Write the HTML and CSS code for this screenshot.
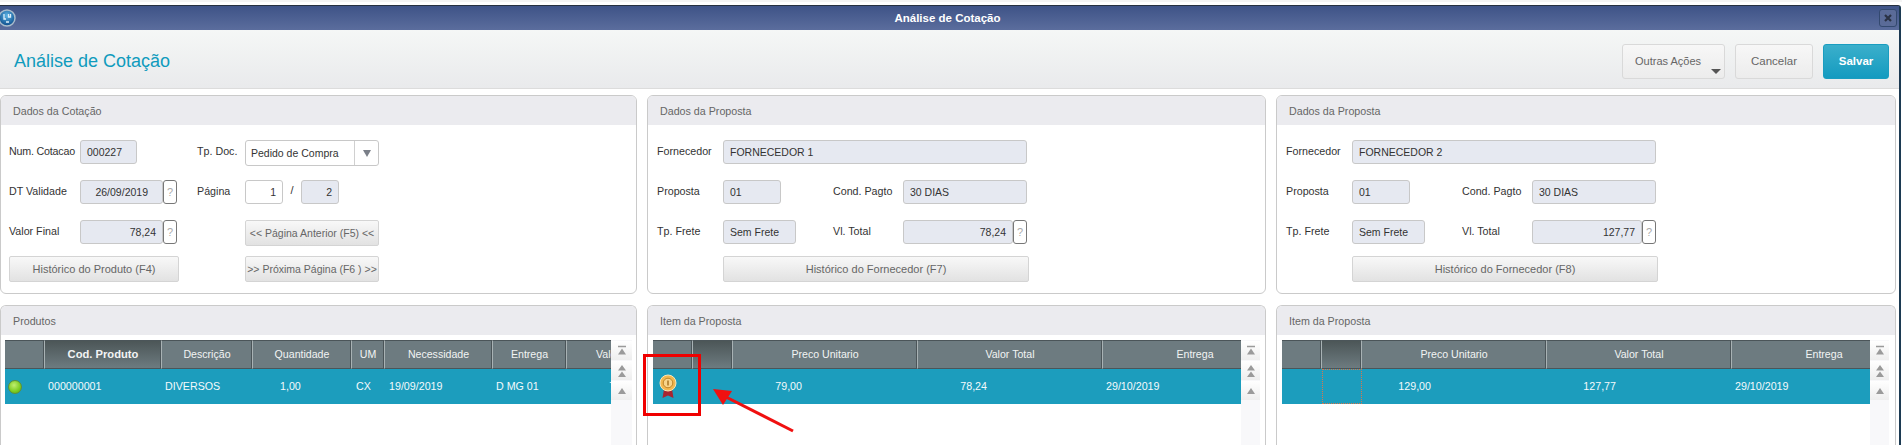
FILE: index.html
```html
<!DOCTYPE html>
<html lang="pt">
<head>
<meta charset="utf-8">
<title>Análise de Cotação</title>
<link rel="stylesheet" href="styles.css">
</head>
<body>
<div class="strip"></div>
<div class="window">
  <div class="titlebar">
    <svg class="logo" width="20" height="20" viewBox="0 0 20 20"><defs><radialGradient id="lg" cx="50%" cy="35%" r="65%"><stop offset="0" stop-color="#5db4e4"/><stop offset="1" stop-color="#0a4a8a"/></radialGradient></defs><circle cx="8" cy="10" r="8" fill="url(#lg)" stroke="#a9bccb" stroke-width="1.500"/><path d="M5 6v5h2M9.500 6v3h2V6M7 14h3" fill="none" stroke="#dceefa" stroke-width="1.300"/></svg>
    <span class="window-title">Análise de Cotação</span>
    <span class="close"><svg width="10" height="10" viewBox="0 0 10 10"><path d="M2 2l6 6M8 2l-6 6" stroke="#2a3244" stroke-width="2.200"/></svg></span>
  </div>
  <header class="head">
    <h1>Análise de Cotação</h1>
    <div class="actions">
      <button class="btn more">Outras Ações<i class="caret"></i></button>
      <button class="btn cancel">Cancelar</button>
      <button class="btn save">Salvar</button>
    </div>
  </header>
  <main class="content">
    <section class="panel">
      <h2>Dados da Cotação</h2>
      <div class="form form-cot">
        <label class="l1 squeeze">Num. Cotacao</label>
        <div class="field w57 span2">000227</div>
        <label class="c5">Tp. Doc.</label>
        <div class="field select c6e">Pedido de Compra<span class="sel-btn"><i class="sel-arrow"></i></span></div>

        <label class="l1">DT Validade</label>
        <div class="field right date">26/09/2019</div>
        <span class="help">?</span>
        <label class="c5">Página</label>
        <div class="field right white">1</div>
        <span class="slash">/</span>
        <div class="field right">2</div>

        <label class="l1">Valor Final</label>
        <div class="field right">78,24</div>
        <span class="help">?</span>
        <button class="gbtn c6e tight">&lt;&lt; Página Anterior (F5) &lt;&lt;</button>

        <button class="gbtn span3">Histórico do Produto (F4)</button>
        <button class="gbtn c6e tight">&gt;&gt; Próxima Página (F6 ) &gt;&gt;</button>
      </div>
    </section>

    <section class="panel">
      <h2>Dados da Proposta</h2>
      <div class="form form-prop">
        <label class="l1">Fornecedor</label>
        <div class="field c2e">FORNECEDOR 1</div>
        <label class="l1">Proposta</label>
        <div class="field w58">01</div>
        <label>Cond. Pagto</label>
        <div class="field c4e">30 DIAS</div>
        <label class="l1">Tp. Frete</label>
        <div class="field w73">Sem Frete</div>
        <label>Vl. Total</label>
        <div class="field right">78,24</div>
        <span class="help">?</span>
        <button class="gbtn c2f">Histórico do Fornecedor (F7)</button>
      </div>
    </section>

    <section class="panel">
      <h2>Dados da Proposta</h2>
      <div class="form form-prop">
        <label class="l1">Fornecedor</label>
        <div class="field c2e">FORNECEDOR 2</div>
        <label class="l1">Proposta</label>
        <div class="field w58">01</div>
        <label>Cond. Pagto</label>
        <div class="field c4e">30 DIAS</div>
        <label class="l1">Tp. Frete</label>
        <div class="field w73">Sem Frete</div>
        <label>Vl. Total</label>
        <div class="field right">127,77</div>
        <span class="help">?</span>
        <button class="gbtn c2f">Histórico do Fornecedor (F8)</button>
      </div>
    </section>

    <section class="panel lower">
      <h2>Produtos</h2>
      <div class="grid-wrap g1">
        <div class="table t-prod">
          <div class="th"></div><div class="th sel bold">Cod. Produto</div><div class="th">Descrição</div><div class="th">Quantidade</div><div class="th">UM</div><div class="th">Necessidade</div><div class="th">Entrega</div><div class="th start">Valor Total</div>
          <div class="td"><span class="led"></span></div><div class="td p3">000000001</div><div class="td p3">DIVERSOS</div><div class="td p27">1,00</div><div class="td p4">CX</div><div class="td p4">19/09/2019</div><div class="td p3">D MG 01</div><div class="td num">78,24</div>
        </div>
        <div class="scroll">
          <span class="sb"><svg width="12" height="12" viewBox="0 0 12 12"><path d="M2 1.500h8" stroke="#9a9a9a" stroke-width="1.500"/><path d="M6 3.500l4 6H2z" fill="#9a9a9a"/></svg></span>
          <span class="sb"><svg width="12" height="14" viewBox="0 0 12 14"><path d="M6 1l4 5.500H2zM6 7.500l4 5.500H2z" fill="#9a9a9a"/></svg></span>
          <span class="sb"><svg width="12" height="12" viewBox="0 0 12 12"><path d="M6 3l4 6H2z" fill="#9a9a9a"/></svg></span>
        </div>
      </div>
    </section>

    <section class="panel lower">
      <h2>Item da Proposta</h2>
      <div class="grid-wrap g2">
        <div class="table t-item">
          <div class="th"></div><div class="th sel"></div><div class="th">Preco Unitario</div><div class="th">Valor Total</div><div class="th">Entrega</div>
          <div class="td medal-cell"><svg width="18" height="26" viewBox="0 0 18 26"><path d="M5 15l-1.500 9 5.500-2.500 5.500 2.500L13 15z" fill="#a82430"/><circle cx="9" cy="9" r="8" fill="#f2b850" stroke="#fbe6b8" stroke-width="1"/><circle cx="9" cy="9" r="4.800" fill="#f8d48a" stroke="#c08428" stroke-width="1"/><path d="M9 6.500v5" stroke="#a46e1c" stroke-width="1.400"/></svg></div><div class="td"></div><div class="td num">79,00</div><div class="td num">78,24</div><div class="td p3">29/10/2019</div>
        </div>
        <div class="scroll">
          <span class="sb"><svg width="12" height="12" viewBox="0 0 12 12"><path d="M2 1.500h8" stroke="#9a9a9a" stroke-width="1.500"/><path d="M6 3.500l4 6H2z" fill="#9a9a9a"/></svg></span>
          <span class="sb"><svg width="12" height="14" viewBox="0 0 12 14"><path d="M6 1l4 5.500H2zM6 7.500l4 5.500H2z" fill="#9a9a9a"/></svg></span>
          <span class="sb"><svg width="12" height="12" viewBox="0 0 12 12"><path d="M6 3l4 6H2z" fill="#9a9a9a"/></svg></span>
        </div>
      </div>
    </section>

    <section class="panel lower">
      <h2>Item da Proposta</h2>
      <div class="grid-wrap g2">
        <div class="table t-item">
          <div class="th"></div><div class="th sel"></div><div class="th">Preco Unitario</div><div class="th">Valor Total</div><div class="th">Entrega</div>
          <div class="td"></div><div class="td focus"></div><div class="td num">129,00</div><div class="td num">127,77</div><div class="td p3">29/10/2019</div>
        </div>
        <div class="scroll">
          <span class="sb"><svg width="12" height="12" viewBox="0 0 12 12"><path d="M2 1.500h8" stroke="#9a9a9a" stroke-width="1.500"/><path d="M6 3.500l4 6H2z" fill="#9a9a9a"/></svg></span>
          <span class="sb"><svg width="12" height="14" viewBox="0 0 12 14"><path d="M6 1l4 5.500H2zM6 7.500l4 5.500H2z" fill="#9a9a9a"/></svg></span>
          <span class="sb"><svg width="12" height="12" viewBox="0 0 12 12"><path d="M6 3l4 6H2z" fill="#9a9a9a"/></svg></span>
        </div>
      </div>
    </section>
  </main>
</div>
<div class="mark-box"></div>
<svg class="mark-arrow" width="100" height="60" viewBox="0 0 100 60"><path d="M87 46L18 11" stroke="#f01010" stroke-width="3" fill="none"/><path d="M7 4l19 2-9 14z" fill="#f01010"/></svg>
</body>
</html>
```
FILE: styles.css
```css
* { box-sizing: border-box; }
html, body { margin: 0; height: 445px; overflow: hidden; background: #fff; }
body { position: relative; font: 11px "Liberation Sans", Arial, sans-serif; color: #333; }
.strip { height: 5px; background: linear-gradient(#f4f4f4 0 2px, #fff 2px); }
.window { border-top: 1px solid #26303f; border-right: 2px solid #1c3a52; border-top-right-radius: 3px; height: 440px; margin-right: 1px; }
.titlebar { height: 24px; padding-right: 4px; background: linear-gradient(#3e5387, #5b6d9d); display: flex; align-items: center; justify-content: center; position: relative; }
.logo { position: absolute; left: -1px; top: 2px; }
.window-title { color: #fff; font-weight: bold; font-size: 11.500px; }
.close { position: absolute; right: 2px; top: 3px; width: 18px; height: 18px; border: 1px solid #33496f; border-radius: 3px; background: #5a6b98; display: flex; align-items: center; justify-content: center; }
.head { height: 59px; background: linear-gradient(#f5f7f6, #e9eaec); border-bottom: 1px solid #dcdcdc; display: flex; align-items: center; justify-content: space-between; padding: 0 10px 0 14px; }
h1 { margin: 4px 0 0; font-size: 18px; font-weight: normal; color: #0f9bbd; }
.actions { display: flex; gap: 10px; margin-top: 4px; }
.btn { height: 35px; font: 11.500px "Liberation Sans", Arial, sans-serif; border: 1px solid #d9d9d9; border-radius: 3px; background: linear-gradient(#f7f7f7, #ececec); color: #666; padding: 0; position: relative; }
.more { width: 103px; font-size: 11px; text-align: left; padding: 0 0 1px 12px; }
.cancel { width: 78px; }
.save { width: 66px; border-color: #1a9dc0; background: linear-gradient(#3bafcb, #149bc0); color: #fff; font-weight: bold; }
.caret { position: absolute; right: 3px; bottom: 4px; border: 5px solid transparent; border-top: 5px solid #555; border-bottom: 0; width: 0; height: 0; }
.content { display: grid; grid-template-columns: 637px 619px 620px; column-gap: 10px; row-gap: 11px; grid-template-rows: 199px 1fr; padding-top: 6px; }
.panel { border: 1px solid #cacaca; border-radius: 6px; background: #fff; overflow: hidden; }
.lower { height: 160px; border-bottom: 0; border-radius: 6px 6px 0 0; }
.panel h2 { margin: 0; height: 29px; line-height: 30px; padding-left: 12px; font-size: 10.700px; font-weight: normal; color: #666; background: #ebebef; }
.form { display: grid; grid-template-rows: 40px 40px 36px 26px; padding: 15px 0 0 9px; }
.form-cot { grid-template-columns: 71px 83px 14px 2px 18px 48px 38px 18px 38px 40px; padding-left: 8px; }
.form-prop { grid-template-columns: 66px 110px 70px 110px 14px 2px; }
.form label { line-height: 22px; height: 24px; white-space: nowrap; color: #333; font-size: 10.700px; }
.form label.squeeze { letter-spacing: -0.2px; }
.l1 { grid-column: 1; }
.field { height: 24px; line-height: 22px; font-size: 10.500px; border: 1px solid #c8c8c8; border-radius: 3px; background: #e6e9f1; padding: 0 6px; white-space: nowrap; color: #333; }
.right { text-align: right; }
.date { padding-right: 14px; }
.white { background: #fff; }
.w57 { width: 57px; }
.w58 { width: 58px; }
.w73 { width: 73px; }
.span2 { grid-column: 2 / 4; }
.span3 { grid-column: 1 / 4; width: 170px; }
.form label.c5 { grid-column: 5 / 7; padding-left: 18px; }
.c6e { grid-column: 7 / 11; }
.c2e { grid-column: 2 / 6; }
.c4e { grid-column: 4 / 6; }
.c2f { grid-column: 2 / 7; }
.select { height: 26px; background: #fff; display: flex; justify-content: space-between; padding: 0 0 0 5px; line-height: 25px; }
.sel-btn { width: 24px; border-left: 1px solid #d0d0d0; display: flex; align-items: center; justify-content: center; }
.sel-arrow { border: 4px solid transparent; border-top: 7px solid #7a7f88; border-bottom: 0; }
.help { height: 24px; width: 14px; line-height: 22px; text-align: center; border: 1px solid #777; border-radius: 3px; color: #aaa; font-size: 11px; background: #fff; }
.slash { text-align: center; line-height: 20px; }
.gbtn { height: 26px; font: 11px "Liberation Sans", Arial, sans-serif; color: #666; border: 1px solid #d4d4d4; border-radius: 2px; background: linear-gradient(#f8f8f8, #e2e2e2); padding: 0; white-space: nowrap; }
.tight { font-size: 10.500px; }
.grid-wrap { display: flex; padding: 5px 0 0 4px; height: 130px; }
.g2 { padding-left: 5px; }
.table { display: grid; grid-template-rows: 29px 35px; overflow: hidden; align-content: start; height: 64px; font-size: 10.700px; }
.t-prod { width: 606px; flex: none; grid-template-columns: 40px 117px 91px 99px 33px 108px 74px 120px; }
.t-item { width: 588px; flex: none; grid-template-columns: 40px 40px 185px 185px 185px; }
.th { background: #6d7b80; color: #f2f4f4; text-align: center; line-height: 27px; font-size: 10.600px; border-top: 1px solid #4b5559; border-bottom: 1px solid #4b5559; border-right: 1px solid #a8b2b4; box-shadow: inset -1px 0 0 #4b5559; white-space: nowrap; overflow: hidden; }
.sel { background: linear-gradient(#4c5657, #6d7b80); }
.bold { font-weight: bold; font-size: 11.200px; }
.start { text-align: left; padding-left: 29px; }
.td { background: #1c9dbd; color: #f4fafc; line-height: 35px; white-space: nowrap; }
.p4 { padding-left: 4px; }
.p3 { padding-left: 3px; }
.p27 { padding-left: 27px; }
.num { text-align: right; padding-right: 116px; }
.t-prod .num { padding-right: 51px; }
.focus { border: 1px dotted #d9764a; }
.led { display: block; width: 14px; height: 14px; margin: 11px 0 0 3px; border-radius: 50%; background: radial-gradient(circle at 42% 35%, #c0ee70, #7ccc20 60%, #5da814); border: 1px solid #5f8f38; }
.medal-cell { padding: 5px 0 0 6px; }
.medal-cell svg { display: block; }
.scroll { width: 19px; height: 100%; background: #f8f8fa; display: flex; flex-direction: column; gap: 1px; padding-top: 1px; flex: none; }
.g1 .scroll { width: 21px; }
.sb { height: 19px; background: linear-gradient(#fff, #eeeeee); display: flex; align-items: center; justify-content: center; }
.mark-box { position: absolute; left: 643px; top: 354px; width: 58px; height: 62px; border: 3px solid #f00000; }
.mark-arrow { position: absolute; left: 706px; top: 385px; }
```
